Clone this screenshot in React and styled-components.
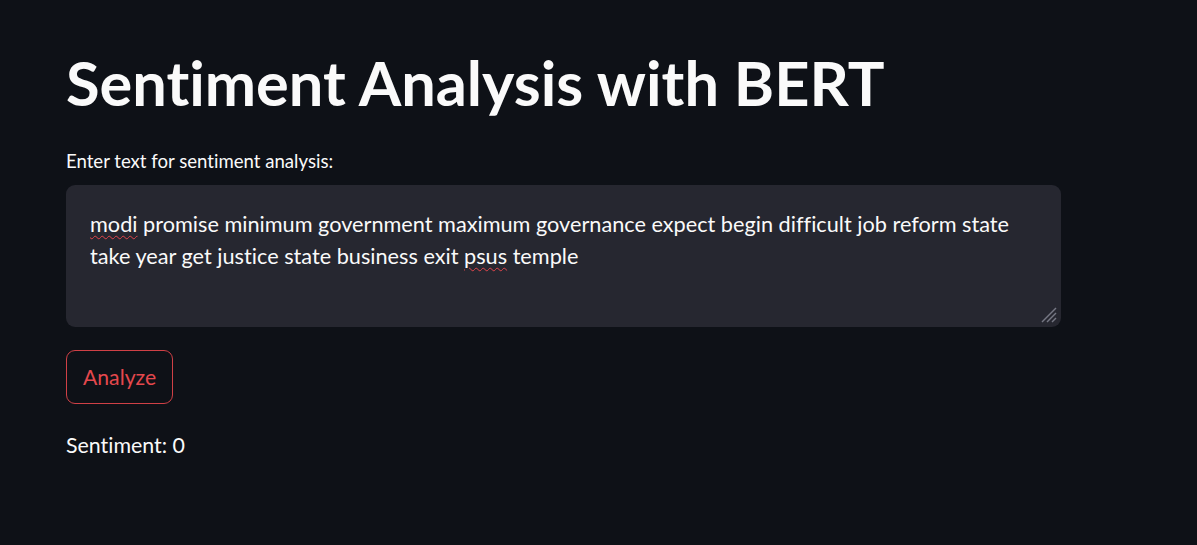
import React from 'react';
import styled, { createGlobalStyle } from 'styled-components';

const GlobalStyle = createGlobalStyle`
  html, body {
    margin: 0;
    padding: 0;
    background: #0e1117;
  }
  body {
    font-family: Lato, "Noto Sans", sans-serif;
    font-variant-ligatures: none;
    color: #fafafa;
  }
`;

const Main = styled.main`
  width: 1197px;
  height: 545px;
  box-sizing: border-box;
  padding: 44px 0 0 66px;
  display: flex;
  flex-direction: column;
  align-items: flex-start;
`;

const Title = styled.h1`
  margin: 0;
  font-size: 61.3px;
  font-weight: 700;
  line-height: 76px;
  color: #fafafa;
`;

const Label = styled.label`
  margin-top: 30px;
  font-size: 18.6px;
  line-height: 22px;
  color: #fafafa;
`;

const TextBox = styled.div`
  position: relative;
  margin-top: 13px;
  width: 995px;
  height: 142px;
  box-sizing: border-box;
  padding: 23px 24px;
  background: #262730;
  border-radius: 9px;
  font-size: 21.7px;
  line-height: 32px;
  color: #fafafa;
`;

const Line = styled.div`
  white-space: nowrap;
`;

const Misspelled = styled.span`
  text-decoration: underline wavy #e0454b;
  text-decoration-thickness: 1px;
  text-underline-offset: 3px;
`;

const Grip = styled.svg`
  position: absolute;
  right: 3px;
  bottom: 3px;
`;

const Button = styled.button`
  margin-top: 23px;
  height: 54px;
  padding: 0 16px;
  display: flex;
  align-items: center;
  background: transparent;
  border: 1px solid #cf4046;
  border-radius: 9px;
  font-family: inherit;
  font-size: 21.2px;
  color: #e4484d;
`;

const Result = styled.p`
  margin: 27px 0 0;
  font-size: 21.4px;
  line-height: 28px;
  color: #fafafa;
`;

export default function App() {
  return (
    <>
      <GlobalStyle />
      <Main>
        <Title>Sentiment Analysis with BERT</Title>
        <Label>Enter text for sentiment analysis:</Label>
        <TextBox>
          <Line>
            <Misspelled>modi</Misspelled>
            <span> promise minimum government maximum governance expect begin difficult job reform state</span>
          </Line>
          <Line>
            <span>take year get justice state business exit </span>
            <Misspelled>psus</Misspelled>
            <span> temple</span>
          </Line>
          <Grip width="20" height="20" viewBox="0 0 20 20">
            <g stroke="#767884" strokeWidth="1.5">
              <line x1="18" y1="4" x2="4" y2="18" />
              <line x1="18" y1="9" x2="9" y2="18" />
              <line x1="18" y1="14" x2="14" y2="18" />
            </g>
          </Grip>
        </TextBox>
        <Button>Analyze</Button>
        <Result>Sentiment: 0</Result>
      </Main>
    </>
  );
}
